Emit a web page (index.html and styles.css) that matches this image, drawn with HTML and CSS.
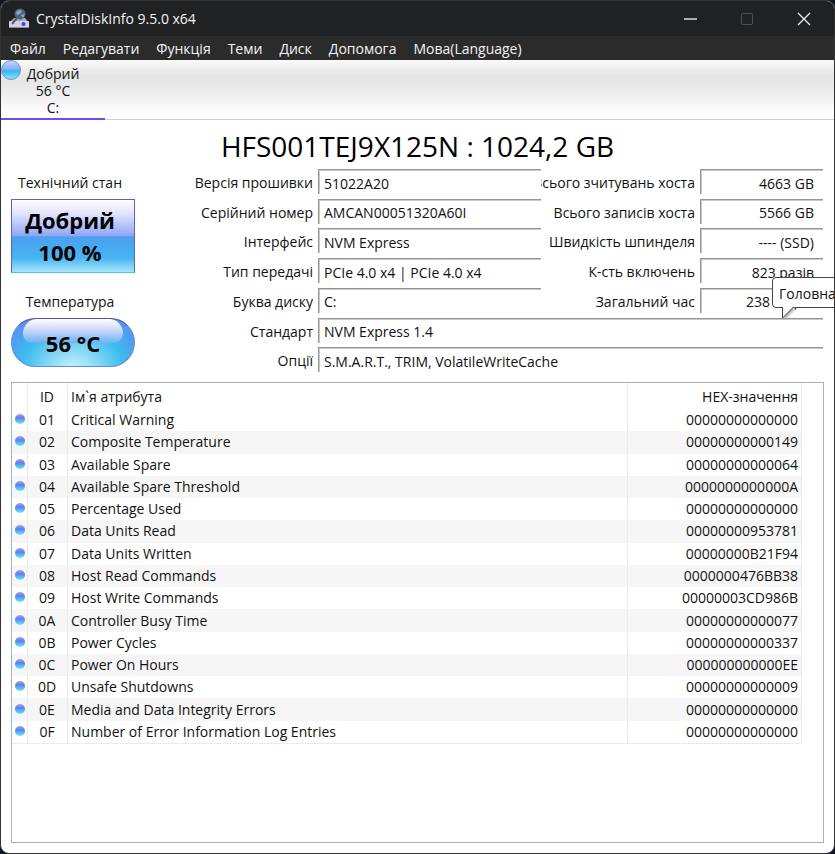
FILE: index.html
```html
<!DOCTYPE html>
<html lang="uk">
<head>
    <meta charset="UTF-8">
    <meta name="viewport" content="width=device-width, initial-scale=1.0">
    <title>CrystalDiskInfo 9.5.0 x64</title>
    <link rel="stylesheet" href="styles.css">
</head>
<body>
    <div class="window">
        <header class="titlebar">
            <svg class="app-icon" width="22" height="22" viewBox="0 0 22 22">
                <path d="M6 10 L17 10 L21 15 L1 15 Z" fill="#aaabb5"/>
                <rect x="1" y="13" width="20" height="7" rx="1" fill="#d3d0e2"/>
                <path d="M1 19.500 H21" stroke="#8d8b99"/>
                <circle cx="12" cy="6" r="5.500" fill="#4b6780"/>
                <path d="M8 4 Q11 1 14 3 L12 6 L9 7 Z M13 7 L17 6 L15 10 Z" fill="#8ba5b8"/>
                <path d="M9 10 L4 16" stroke="#5d5d66" stroke-width="2"/>
                <circle cx="15.500" cy="16" r="2" fill="#3a3cff"/>
            </svg>
            <span class="app-title">CrystalDiskInfo 9.5.0 x64</span>
            <button class="win-btn" aria-label="Minimize">
                <svg width="14" height="14" viewBox="0 0 14 14"><path d="M1 7 H14" stroke="#ddd" stroke-width="1.500"/></svg>
            </button>
            <button class="win-btn" aria-label="Maximize" disabled>
                <svg width="14" height="14" viewBox="0 0 14 14"><rect x="1.500" y="1.500" width="11" height="11" rx="1" fill="none" stroke="#505050"/></svg>
            </button>
            <button class="win-btn" aria-label="Close">
                <svg width="14" height="14" viewBox="0 0 14 14"><path d="M1 1 L13 13 M13 1 L1 13" stroke="#eee" stroke-width="1.300"/></svg>
            </button>
        </header>

        <nav class="menu">
            <button>Файл</button>
            <button>Редагувати</button>
            <button>Функція</button>
            <button>Теми</button>
            <button>Диск</button>
            <button>Допомога</button>
            <button>Мова(Language)</button>
        </nav>

        <div class="disks">
            <button class="disk">
                <span class="ball"></span>
                Добрий<br>56 °C<br>C:
            </button>
        </div>

        <main>
            <h1>HFS001TEJ9X125N : 1024,2 GB</h1>

            <div class="summary">
                <div class="status">
                    <span class="caption">Технічний стан</span>
                    <button class="health">Добрий<br>100 %</button>
                    <span class="caption">Температура</span>
                    <button class="temp">56 °C</button>
                </div>

                <div class="info">
                    <label for="firmware">Версія прошивки</label>
                    <input id="firmware" value="51022A20" readonly>
                    <label for="reads">Всього зчитувань хоста</label>
                    <input id="reads" class="right" value="4663 GB" readonly>

                    <label for="serial">Серійний номер</label>
                    <input id="serial" value="AMCAN00051320A60I" readonly>
                    <label for="writes">Всього записів хоста</label>
                    <input id="writes" class="right" value="5566 GB" readonly>

                    <label for="interface">Інтерфейс</label>
                    <input id="interface" value="NVM Express" readonly>
                    <label for="rpm">Швидкість шпинделя</label>
                    <input id="rpm" class="right" value="---- (SSD)" readonly>

                    <label for="transfer">Тип передачі</label>
                    <input id="transfer" value="PCIe 4.0 x4 | PCIe 4.0 x4" readonly>
                    <label for="power">К-сть включень</label>
                    <input id="power" class="right" value="823 разів" readonly>

                    <label for="letter">Буква диску</label>
                    <input id="letter" value="C:" readonly>
                    <label for="hours">Загальний час</label>
                    <div class="hours">
                        <input id="hours" class="right" value="238 годин" readonly>
                        <div class="tooltip" role="tooltip">
                            Головна
                            <svg class="tail" width="14" height="12" viewBox="0 0 14 12">
                                <path d="M1.500 0 V11 L12.500 0" fill="#fff" stroke="#444"/>
                            </svg>
                        </div>
                    </div>

                    <label for="standard">Стандарт</label>
                    <input id="standard" class="wide" value="NVM Express 1.4" readonly>

                    <label for="features">Опції</label>
                    <input id="features" class="wide" value="S.M.A.R.T., TRIM, VolatileWriteCache" readonly>
                </div>
            </div>

            <div class="attributes">
                <table>
                    <thead>
                        <tr>
                            <th class="dot-col"></th>
                            <th class="id-col">ID</th>
                            <th>Ім`я атрибута</th>
                            <th class="hex-col">HEX-значення</th>
                        </tr>
                    </thead>
                    <tbody>
                        <tr><td><i class="dot"></i></td><td>01</td><td>Critical Warning</td><td>00000000000000</td></tr>
                        <tr><td><i class="dot"></i></td><td>02</td><td>Composite Temperature</td><td>00000000000149</td></tr>
                        <tr><td><i class="dot"></i></td><td>03</td><td>Available Spare</td><td>00000000000064</td></tr>
                        <tr><td><i class="dot"></i></td><td>04</td><td>Available Spare Threshold</td><td>0000000000000A</td></tr>
                        <tr><td><i class="dot"></i></td><td>05</td><td>Percentage Used</td><td>00000000000000</td></tr>
                        <tr><td><i class="dot"></i></td><td>06</td><td>Data Units Read</td><td>00000000953781</td></tr>
                        <tr><td><i class="dot"></i></td><td>07</td><td>Data Units Written</td><td>00000000B21F94</td></tr>
                        <tr><td><i class="dot"></i></td><td>08</td><td>Host Read Commands</td><td>0000000476BB38</td></tr>
                        <tr><td><i class="dot"></i></td><td>09</td><td>Host Write Commands</td><td>00000003CD986B</td></tr>
                        <tr><td><i class="dot"></i></td><td>0A</td><td>Controller Busy Time</td><td>00000000000077</td></tr>
                        <tr><td><i class="dot"></i></td><td>0B</td><td>Power Cycles</td><td>00000000000337</td></tr>
                        <tr><td><i class="dot"></i></td><td>0C</td><td>Power On Hours</td><td>000000000000EE</td></tr>
                        <tr><td><i class="dot"></i></td><td>0D</td><td>Unsafe Shutdowns</td><td>00000000000009</td></tr>
                        <tr><td><i class="dot"></i></td><td>0E</td><td>Media and Data Integrity Errors</td><td>00000000000000</td></tr>
                        <tr><td><i class="dot"></i></td><td>0F</td><td>Number of Error Information Log Entries</td><td>00000000000000</td></tr>
                    </tbody>
                </table>
            </div>
        </main>
    </div>
</body>
</html>
```
FILE: styles.css
```css
* {
    box-sizing: border-box;
}

body {
    margin: 0;
    background: #12141f;
    overflow: hidden;
    font-family: "Open Sans", "Noto Sans", sans-serif;
    font-size: 14px;
    color: #111;
}

button, input {
    font: inherit;
    color: inherit;
    border: none;
    border-radius: 0;
    background: none;
    padding: 0;
}

.window {
    display: flex;
    flex-direction: column;
    height: 100vh;
    border: 1px solid #333;
    border-radius: 9px;
    background: #fff;
    overflow: hidden;
}

.titlebar {
    display: flex;
    align-items: center;
    height: 35px;
    padding: 0 2px 0 7px;
    background: #202122;
    color: #f4f4f4;
}

.app-title {
    flex: 1;
    padding-left: 6px;
    font-size: 14px;
}

.win-btn {
    display: flex;
    align-items: center;
    justify-content: center;
    width: 57px;
    height: 35px;
}

.menu {
    display: flex;
    gap: 17px;
    height: 24px;
    padding-left: 9px;
    background: #2b2b2b;
    color: #f4f4f4;
}

.disks {
    height: 60px;
    border-bottom: 1px solid #d0d0d0;
    background: linear-gradient(#fafafa, #e6e6e6 25%, #e8e8e8 45%, #fff 92%);
}

.disk {
    position: relative;
    width: 104px;
    height: 60px;
    padding-top: 3px;
    border-bottom: 2px solid #7a45f5;
    line-height: 17px;
}

.ball {
    position: absolute;
    left: 0;
    top: 0;
    width: 20px;
    height: 20px;
    border: 1px solid #7390d8;
    border-radius: 50%;
    background: linear-gradient(#c8d4fa, #7fb4f4 45%, #38b4f0 55%, #8de4fa);
}

main {
    display: flex;
    flex: 1;
    flex-direction: column;
    padding: 5px 10px 10px;
}

h1 {
    margin: 0;
    font-size: 28px;
    font-weight: normal;
    line-height: 42px;
    text-align: center;
    color: #000;
}

.summary {
    display: flex;
    margin-top: 2px;
    padding-right: 1px;
}

.status {
    display: flex;
    flex-direction: column;
    width: 124px;
}

.caption {
    height: 30px;
    line-height: 27px;
    padding-right: 6px;
    text-align: center;
}

.health {
    height: 74px;
    margin-bottom: 15px;
    padding-right: 6px;
    border: 1px solid #5b62b8;
    border-bottom-color: #4fc8ee;
    background: linear-gradient(#fff, #dfe2fd 20%, #8ea5f5 50%, #4aa0f0 51%, #46b4f2 80%, #a5e6fa);
    font-size: 22px;
    font-weight: bold;
    line-height: 32px;
    color: #000;
}

.temp {
    position: relative;
    z-index: 0;
    height: 49px;
    border: 1px solid #5b8fe0;
    border-top-color: #5550a0;
    border-radius: 25px;
    background: radial-gradient(ellipse at 50% 115%, #c8f2fc 5%, #3cbcee 60%, #6580f2 100%);
    font-size: 22px;
    font-weight: bold;
    line-height: 44px;
    color: #000;
}

/* glossy highlight */
.temp::before {
    content: "";
    position: absolute;
    z-index: -1;
    left: 11px;
    right: 11px;
    top: 0;
    height: 24px;
    border-radius: 18px 18px 12px 12px;
    background: linear-gradient(#fff, #d5dcfd 40%, #6fb0f4);
}

.info {
    display: grid;
    grid-template-columns: 178px 1fr 154px 128px;
    grid-auto-rows: 1fr;
    flex: 1;
    height: 208px;
}

.info label {
    display: flex;
    justify-content: flex-end;
    height: 28px;
    line-height: 28px;
    overflow: hidden;
    white-space: nowrap;
}

.info input {
    min-width: 0;
    height: 25px;
    margin-left: 5px;
    padding: 2px 4px 0 5px;
    border-top: 1px solid #959595;
    border-left: 1px solid #959595;
    box-shadow: inset 1px 1px #c8c8c8;
    outline: none;
}

.info .right {
    padding-right: 9px;
    text-align: right;
}

.info .wide {
    grid-column: 2 / -1;
}

.hours {
    display: flex;
    position: relative;
}

.hours input {
    flex: 1;
}

.tooltip {
    position: absolute;
    left: 77px;
    top: -11px;
    width: 72px;
    height: 31px;
    padding-left: 6px;
    border: 1px solid #444;
    border-radius: 4px;
    background: #fff;
    line-height: 31px;
}

.tail {
    position: absolute;
    left: 8px;
    top: 29px;
    filter: drop-shadow(2px 1px 1px #aaa);
}

.attributes {
    flex: 1;
    margin-top: 5px;
    padding-right: 21px;
    border: 1px solid #acb0b5;
}

table {
    width: 100%;
    height: 361px;
    table-layout: fixed;
    border-collapse: separate;
    border-spacing: 0;
}

th, td {
    padding: 0 4px 0 3px;
    border-right: 1px solid #ececec;
    font-weight: normal;
    line-height: 22px;
    text-align: left;
}

th {
    height: 26px;
    padding-top: 2px;
}

tbody tr:nth-child(even) {
    background: #f6f6f6;
}

tr:last-child td {
    border-bottom: 1px solid #ececec;
}

td:first-child {
    padding-bottom: 2px;
}

.dot-col {
    width: 16px;
}

.id-col {
    width: 40px;
}

.hex-col {
    width: 174px;
}

th:nth-child(2), td:nth-child(2) {
    text-align: center;
}

th:last-child, td:last-child {
    padding-right: 3px;
    text-align: right;
}

.dot {
    display: block;
    width: 10px;
    height: 10px;
    border-radius: 50%;
    background: linear-gradient(#a9a4f0, #6c78e4 40%, #45b4f2 60%, #7fdcf8);
}
```
